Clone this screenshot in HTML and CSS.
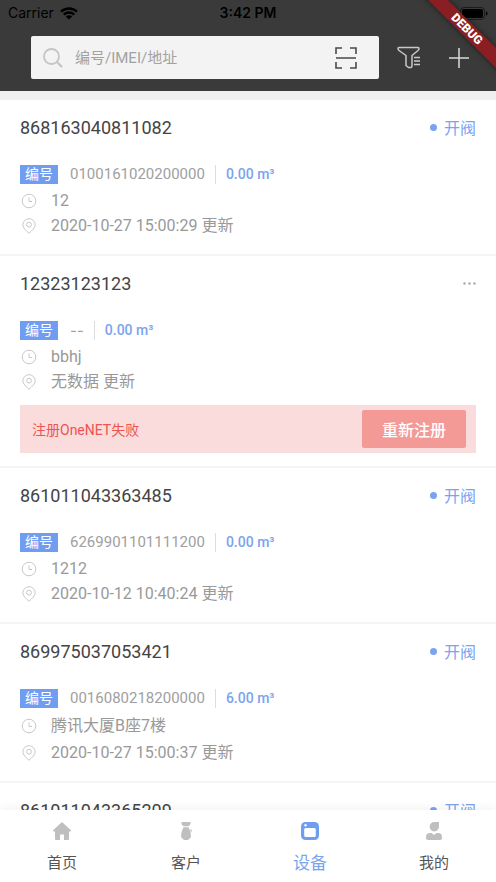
FILE: index.html
```html
<!DOCTYPE html>
<html lang="zh-CN">
<head>
<meta charset="utf-8">
<meta name="viewport" content="width=device-width, initial-scale=1">
<title>设备</title>
<link rel="stylesheet" href="styles.css">
</head>
<body>
<svg class="sprite" aria-hidden="true">
  <symbol id="clock" viewBox="0 0 16 16"><circle cx="8" cy="8" r="6.800"/><path d="M8 4.500v4h3"/></symbol>
  <symbol id="pin" viewBox="0 0 16 16"><path d="M8 15.300C5 12.500 1.900 9.800 1.900 6.700a6.100 6 0 0 1 12.200 0C14.100 9.800 11 12.500 8 15.300z"/><circle cx="8" cy="6.700" r="2.400"/></symbol>
</svg>
<div class="app">
  <header class="header">
    <div class="status">
      <div class="carrier">Carrier
        <svg width="18" height="13" viewBox="0 0 18 13" aria-hidden="true"><path d="M1 4.700a11.500 11.500 0 0 1 16 0M3.800 7.600a7.500 7.500 0 0 1 10.400 0" fill="none" stroke="#000" stroke-width="2.400"/><path d="M9 12.600 5.800 9.500a4.600 4.600 0 0 1 6.400 0z"/></svg>
      </div>
      <time class="time">3:42 PM</time>
      <div class="battery"><svg width="28" height="13" viewBox="0 0 28 13" aria-hidden="true"><rect x=".5" y=".5" width="24" height="12" rx="3.500" fill="none" stroke="#1c1c1c"/><rect x="2" y="2" width="21" height="9" rx="2"/><path d="M26 4.500c2 .6 2 3.400 0 4z"/></svg></div>
    </div>
    <div class="tools">
      <div class="search">
        <svg width="20" height="20" viewBox="0 0 20 20" fill="none" stroke="#c4c4c4" stroke-width="1.800" aria-hidden="true"><circle cx="8.500" cy="8.500" r="7.500"/><path d="m14 14 5 5" stroke-width="2.200"/></svg>
        <input type="text" aria-label="搜索设备" placeholder="编号/IMEI/地址">
        <button type="button" aria-label="扫码"><svg width="22" height="22" viewBox="0 0 22 22" fill="none" stroke="#4a4a4a" stroke-width="1.600"><path d="M1 7V1h6M15 1h6v6M21 15v6h-6M7 21H1v-6M1 11h20"/></svg></button>
      </div>
      <button type="button" aria-label="筛选"><svg width="24" height="24" viewBox="0 0 24 24" fill="none" stroke="#c9c9c9" stroke-width="1.500" stroke-linejoin="round"><path d="M2 1.500h19q1 0 1 1 0 1-1 2L15 9.500V20q0 1-1 1.500h-2.500L9 19.500V9.500L2 4.500Q1 3.500 1 2.500q0-1 1-1zM17 11.500h6M17 15h6M17 18.500h6"/></svg></button>
      <button type="button" aria-label="添加"><svg width="20" height="20" viewBox="0 0 20 20" stroke="#dadada" stroke-width="1.500"><path d="M10 0v20M0 10h20"/></svg></button>
    </div>
    <div class="ribbon">DEBUG</div>
  </header>

  <main class="list">
    <article class="card">
      <div class="head"><h2>868163040811082</h2><span class="state">开阀</span></div>
      <div class="meter"><span class="tag">编号</span><span class="code">0100161020200000</span><span class="volume">0.00 m³</span></div>
      <div class="row"><svg class="icon"><use href="#clock"/></svg><span>12</span></div>
      <div class="row"><svg class="icon"><use href="#pin"/></svg><span>2020-10-27 15:00:29 更新</span></div>
    </article>
    <article class="card failed">
      <div class="head"><h2>12323123123</h2><button class="more" type="button" aria-label="更多"><svg width="13" height="3" viewBox="0 0 13 3" fill="#aaa"><circle cx="1.500" cy="1.500" r="1.200"/><circle cx="6.500" cy="1.500" r="1.200"/><circle cx="11.500" cy="1.500" r="1.200"/></svg></button></div>
      <div class="meter"><span class="tag">编号</span><span class="code empty">--</span><span class="volume">0.00 m³</span></div>
      <div class="row"><svg class="icon"><use href="#clock"/></svg><span>bbhj</span></div>
      <div class="row"><svg class="icon"><use href="#pin"/></svg><span>无数据 更新</span></div>
      <div class="alert"><span>注册OneNET失败</span><button type="button">重新注册</button></div>
    </article>
    <article class="card">
      <div class="head"><h2>861011043363485</h2><span class="state">开阀</span></div>
      <div class="meter"><span class="tag">编号</span><span class="code">6269901101111200</span><span class="volume">0.00 m³</span></div>
      <div class="row"><svg class="icon"><use href="#clock"/></svg><span>1212</span></div>
      <div class="row"><svg class="icon"><use href="#pin"/></svg><span>2020-10-12 10:40:24 更新</span></div>
    </article>
    <article class="card">
      <div class="head"><h2>869975037053421</h2><span class="state">开阀</span></div>
      <div class="meter"><span class="tag">编号</span><span class="code">0016080218200000</span><span class="volume">6.00 m³</span></div>
      <div class="row address"><svg class="icon"><use href="#clock"/></svg><span>腾讯大厦B座7楼</span></div>
      <div class="row"><svg class="icon"><use href="#pin"/></svg><span>2020-10-27 15:00:37 更新</span></div>
    </article>
    <article class="card">
      <div class="head"><h2>861011043365209</h2><span class="state">开阀</span></div>
    </article>
  </main>

  <nav class="tabs">
    <a href="#home"><svg width="20" height="20" viewBox="0 0 20 20" aria-hidden="true"><path d="M10 1 .8 9.500 1.500 10.500H3V18q0 1 1 1h4v-5.500h4V19h4q1 0 1-1v-7.500h1.500l.7-1z"/></svg>首页</a>
    <a href="#customers"><svg width="20" height="20" viewBox="0 0 20 20" aria-hidden="true"><path d="M5.500 1h9v2.200l-2 2h-5l-2-2zM7.500 6.200h5L14.500 11l.5 5-3 3H8l-3-3 .5-5zM14 7.500l2 2-1 2z"/></svg>客户</a>
    <a href="#devices" class="active" aria-current="page"><svg width="20" height="20" viewBox="0 0 20 20" aria-hidden="true"><rect x="1" y="1" width="18" height="18" rx="4.500"/><rect x="4.200" y="7" width="11.600" height="9" rx="1.500" fill="#fff"/><circle cx="5.500" cy="4.200" r="1.200" fill="#fff"/></svg>设备</a>
    <a href="#mine"><svg width="20" height="20" viewBox="0 0 20 20" aria-hidden="true"><path d="M10.500 1H15v4.800a4.700 4.700 0 1 1-4.500-4.800zM2 16q0-4 4-4h1.500L10 14l2.500-2H14q4 0 4 4v1q0 2-2 2H4q-2 0-2-2z"/></svg>我的</a>
  </nav>
</div>
</body>
</html>
```

FILE: styles.css
```css
* { box-sizing: border-box; }

body {
  margin: 0;
  background: #fff;
  color: #444;
  font-family: Roboto, "Noto Sans CJK SC", sans-serif;
}

button {
  display: flex;
  padding: 0;
  border: 0;
  background: none;
  font: inherit;
}

svg { flex: none; }
.sprite { display: none; }

.app {
  display: flex;
  flex-direction: column;
  height: 100vh;
  overflow: hidden;
}

.header {
  position: relative;
  overflow: hidden;
  flex: none;
  padding-bottom: 12px;
  background: #3a3a3a;
}

.status {
  display: grid;
  grid-template-columns: 1fr auto 1fr;
  align-items: center;
  height: 26px;
  padding: 0 8px;
  color: #000;
  font: 14px/26px Inter, sans-serif;
}
.carrier { display: flex; align-items: center; gap: 6px; }
.time { font-weight: 600; }
.battery { display: flex; justify-content: flex-end; }

.tools {
  display: flex;
  align-items: center;
  padding: 10px 27px 0 31px;
}
.tools > button { margin-left: 18px; }
.tools > button + button { margin-left: 28px; }

.search {
  flex: 1;
  display: flex;
  align-items: center;
  min-width: 0;
  height: 43px;
  padding: 0 22px 0 12px;
  border-radius: 2px;
  background: #f3f3f3;
}
.search input {
  flex: 1;
  min-width: 0;
  padding: 0 12px;
  border: 0;
  outline: 0;
  background: none;
  font: inherit;
  font-size: 15px;
}
.search input::placeholder { color: #a2a2a2; opacity: 1; }

.ribbon {
  position: absolute;
  top: 22px;
  right: -31px;
  width: 120px;
  background: #8a1e22;
  box-shadow: 0 0 6px rgba(0, 0, 0, .5);
  color: #fff;
  font-size: 12px;
  font-weight: 900;
  line-height: 14px;
  text-align: center;
  transform: rotate(45deg);
}

.list {
  flex: 1;
  min-height: 0;
  overflow: hidden;
  border-top: 9px solid #efefef;
}

.card {
  padding: 13px 20px 16px;
  border-bottom: 2px solid #f4f4f4;
}
.failed { padding-bottom: 13px; }

.head {
  display: flex;
  align-items: center;
  justify-content: space-between;
  height: 28px;
  margin-bottom: 19px;
}
.head h2 {
  margin: 0;
  font-size: 18px;
  font-weight: 400;
}

.state {
  display: flex;
  align-items: center;
  gap: 7px;
  color: #7ba3ee;
  font-size: 16px;
}
.state::before {
  content: "";
  width: 7px;
  height: 7px;
  border-radius: 50%;
  background: currentColor;
}

.meter {
  display: flex;
  align-items: center;
  height: 28px;
}
.tag {
  width: 38px;
  margin-right: 12px;
  background: #6f9df2;
  color: #fff;
  font-size: 14px;
  line-height: 19px;
  text-align: center;
}
.code { color: #a0a0a0; font-size: 15px; }
.empty { font-family: Inter, sans-serif; }
.volume {
  margin-left: 10px;
  padding-left: 10px;
  border-left: 1px solid #ddd;
  color: #7ba3ee;
  font-size: 14px;
  font-weight: 500;
  line-height: 19px;
}

.row {
  display: flex;
  align-items: center;
  height: 25px;
  color: #999;
  font-size: 16px;
  line-height: 24px;
}
.address { height: 28px; }
.icon {
  width: 16px;
  height: 16px;
  margin: 0 14px 0 1px;
  fill: none;
  stroke: #c8c8c8;
}

.alert {
  display: flex;
  align-items: center;
  justify-content: space-between;
  height: 48px;
  margin-top: 11px;
  padding: 0 10px 0 12px;
  background: #fadcdd;
  color: #ed5350;
  font-size: 14px;
}
.alert button {
  align-items: center;
  height: 38px;
  padding: 0 20px;
  border-radius: 2px;
  background: #f49a96;
  color: #fff;
  font-size: 16px;
  font-weight: 500;
}

.tabs {
  flex: none;
  display: grid;
  grid-template-columns: repeat(4, 1fr);
  height: 72px;
  background: #fff;
  box-shadow: 0 -2px 10px rgba(0, 0, 0, .05);
}
.tabs a {
  display: flex;
  flex-direction: column;
  align-items: center;
  gap: 9px;
  padding-top: 11px;
  color: #555;
  font-size: 15px;
  line-height: 26px;
  text-decoration: none;
}
.tabs svg { fill: #bfbfbf; }
.tabs .active { color: #7ba3ee; font-size: 17px; }
.tabs .active svg { fill: #6f9df2; }
```
